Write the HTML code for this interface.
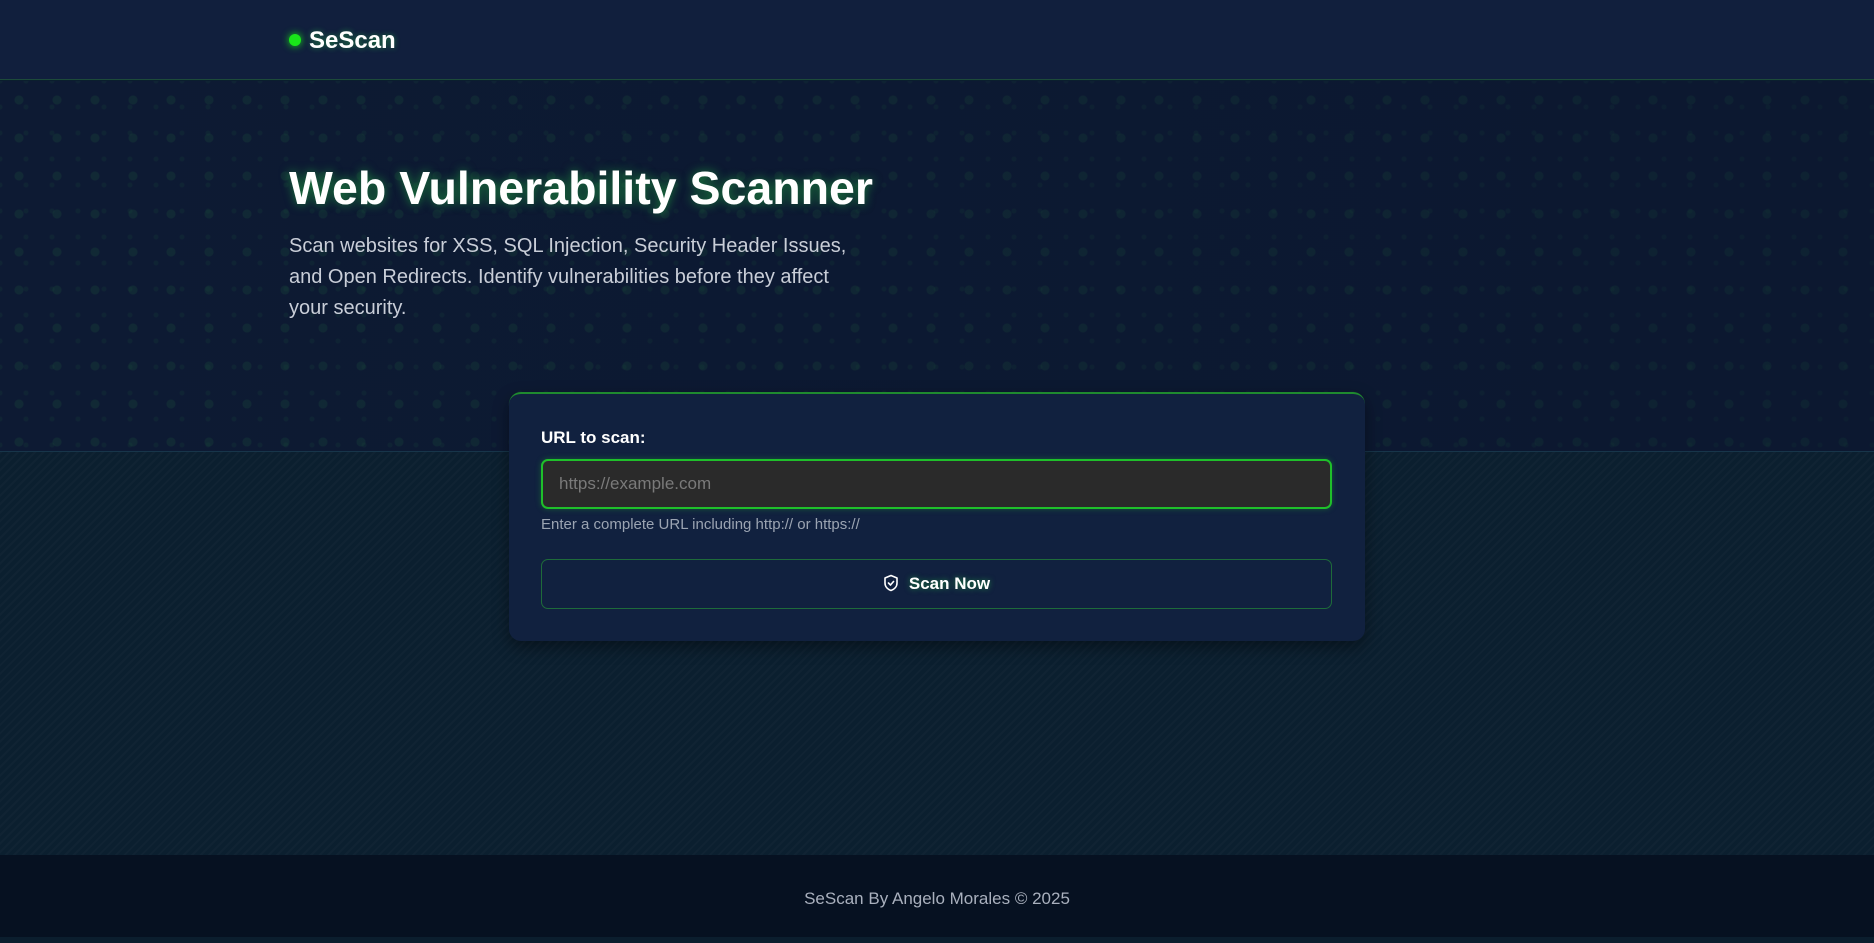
<!DOCTYPE html>
<html><head><meta charset="utf-8"><style>
*{box-sizing:border-box;margin:0;padding:0}
body{width:1874px;height:937px;overflow:hidden;background:#0b1e2e;font-family:"Liberation Sans",sans-serif;position:relative}
.hdr{position:absolute;left:0;top:0;width:1874px;height:80px;background:#111f3d;border-bottom:1px solid #1d4a3a}
.logo{position:absolute;left:309px;top:27px;color:#fff;font-weight:bold;font-size:24px;text-shadow:0 0 6px rgba(50,255,80,.4)}
.dot{position:absolute;left:289px;top:34px;width:12px;height:12px;border-radius:50%;background:#19e619;box-shadow:0 0 8px #19e619}
.hero{position:absolute;left:0;top:81px;width:1874px;height:371px;background:#0d1a33;
background-image:radial-gradient(circle,rgba(30,90,60,.3) 4px,transparent 5px),radial-gradient(circle,rgba(30,90,60,.2) 2px,transparent 3px);
background-size:38px 38px,26px 26px;background-position:0 0,13px 13px;border-bottom:1px solid #17354a}
.hero:after{content:"";position:absolute;inset:0;background:linear-gradient(90deg,rgba(13,26,51,.2),rgba(10,22,45,.5))}
h1{position:absolute;left:289px;top:161px;font-size:46.5px;font-weight:bold;color:#fff;text-shadow:0 0 10px rgba(40,220,70,.55);z-index:2}
p.sub{position:absolute;left:289px;top:231px;width:580px;font-size:20px;line-height:31px;color:#c9ced8;z-index:2}
.low{position:absolute;left:0;top:452px;width:1874px;height:403px;background:#0b1f2f;background-image:repeating-linear-gradient(135deg,rgba(255,255,255,.02) 0 2px,transparent 2px 6px)}
.foot{position:absolute;left:0;top:855px;width:1874px;height:82px;background:#061121;color:#a9b0bd;font-size:17px;text-align:center;line-height:88px}
.card{position:absolute;left:509px;top:392px;width:856px;height:249px;background:#11213f;border-radius:12px;border-top:2px solid #1f8a2f;box-shadow:0 6px 16px rgba(0,0,0,.4);z-index:3}
.lbl{position:absolute;left:32px;top:34px;color:#fff;font-weight:bold;font-size:17px}
.inp{position:absolute;left:32px;top:65px;width:791px;height:50px;background:#2a2a2a;border:2px solid #1fbf2a;border-radius:7px;box-shadow:0 0 6px rgba(31,191,42,.35);color:#7a7a7a;font-size:17px;line-height:46px;padding-left:16px}
.help{position:absolute;left:32px;top:122px;color:#9ba4b2;font-size:15px}
.btn{position:absolute;left:32px;top:165px;width:791px;height:50px;border:1px solid #1e6b3a;border-radius:7px;color:#fff;font-weight:bold;font-size:17px;text-align:center;line-height:48px;text-shadow:0 0 6px rgba(40,220,70,.5)}
.btn svg{vertical-align:-3px;margin-right:10px}
</style></head><body>
<div class="hdr"></div><div class="dot"></div><div class="logo">SeScan</div>
<div class="hero"></div>
<h1>Web Vulnerability Scanner</h1>
<p class="sub">Scan websites for XSS, SQL Injection, Security Header Issues, and Open Redirects. Identify vulnerabilities before they affect your security.</p>
<div class="low"></div>
<div class="card">
<div class="lbl">URL to scan:</div>
<div class="inp">https://example.com</div>
<div class="help">Enter a complete URL including http:// or https://</div>
<div class="btn"><svg width="16" height="18" viewBox="0 0 16 18" fill="none" stroke="#fff" stroke-width="1.6" stroke-linejoin="round" stroke-linecap="round"><path d="M8 1.5L14 4v5c0 4-3 6.5-6 7.5C5 15.5 2 13 2 9V4z"/><path d="M5.5 9l2 2 3-3.5"/></svg>Scan Now</div>
</div>
<div class="foot">SeScan By Angelo Morales © 2025</div>
</body></html>
